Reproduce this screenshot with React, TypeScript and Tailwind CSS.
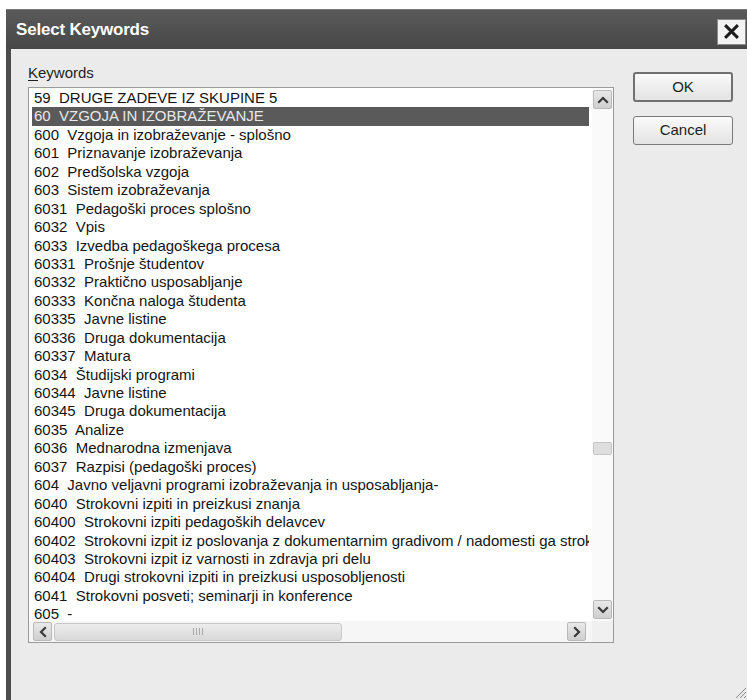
import React from "react";

const keywords: string[] = [
  "59  DRUGE ZADEVE IZ SKUPINE 5",
  "60  VZGOJA IN IZOBRAŽEVANJE",
  "600  Vzgoja in izobraževanje - splošno",
  "601  Priznavanje izobraževanja",
  "602  Predšolska vzgoja",
  "603  Sistem izobraževanja",
  "6031  Pedagoški proces splošno",
  "6032  Vpis",
  "6033  Izvedba pedagoškega procesa",
  "60331  Prošnje študentov",
  "60332  Praktično usposabljanje",
  "60333  Končna naloga študenta",
  "60335  Javne listine",
  "60336  Druga dokumentacija",
  "60337  Matura",
  "6034  Študijski programi",
  "60344  Javne listine",
  "60345  Druga dokumentacija",
  "6035  Analize",
  "6036  Mednarodna izmenjava",
  "6037  Razpisi (pedagoški proces)",
  "604  Javno veljavni programi izobraževanja in usposabljanja-",
  "6040  Strokovni izpiti in preizkusi znanja",
  "60400  Strokovni izpiti pedagoških delavcev",
  "60402  Strokovni izpit iz poslovanja z dokumentarnim gradivom / nadomesti ga strokovni izpit",
  "60403  Strokovni izpit iz varnosti in zdravja pri delu",
  "60404  Drugi strokovni izpiti in preizkusi usposobljenosti",
  "6041  Strokovni posveti; seminarji in konference",
  "605  -",
];

const SELECTED = 1;

function Chevron({ dir }: { dir: "up" | "down" | "left" | "right" }) {
  const paths: Record<string, string> = {
    up: "M3 9 L7 5 L11 9",
    down: "M3 5 L7 9 L11 5",
    left: "M9 3 L5 7 L9 11",
    right: "M5 3 L9 7 L5 11",
  };
  return (
    <svg width="14" height="14" viewBox="0 0 14 14">
      <path d={paths[dir]} fill="none" stroke="#3a3a3a" strokeWidth="2.2" strokeLinecap="square" />
    </svg>
  );
}

function ScrollButton({ dir }: { dir: "up" | "down" | "left" | "right" }) {
  return (
    <div className="w-[19px] h-[19px] rounded-[2px] border border-[#b9b9b9] bg-gradient-to-b from-[#e9e9e9] to-[#cfcfcf] flex items-center justify-center">
      <Chevron dir={dir} />
    </div>
  );
}

export default function App() {
  return (
    <div
      className="w-[747px] h-[700px] bg-white pt-[9px] pl-[6px] overflow-hidden"
      style={{ fontFamily: '"Liberation Sans", Arial, sans-serif' }}
    >
      <div className="h-[700px] flex flex-col bg-[#4c4c4c] rounded-tl-[4px]">
        {/* title bar */}
        <div className="h-[40px] flex items-center justify-between border-t border-[#7a7a7a] bg-gradient-to-b from-[#5a5a5a] to-[#474747]">
          <span className="pl-[10px] text-white font-bold text-[17px] tracking-[-0.2px]">Select Keywords</span>
          <div className="w-[29px] h-[26px] mr-[1px] mt-[4px] bg-[#f3f3f3] border border-[#8c8c8c] flex items-center justify-center">
            <svg width="17" height="17" viewBox="0 0 16 16">
              <path d="M2 2 L14 14 M14 2 L2 14" stroke="#1c1c1c" strokeWidth="2.8" />
            </svg>
          </div>
        </div>

        {/* client area */}
        <div className="relative flex-1 ml-[5px] bg-[#ebebeb] flex items-start">
          <div className="pl-[17px] pt-[15px] flex flex-col">
            <div className="h-[18px] leading-[18px] text-[15px] text-[#1e1e1e]">
              <span className="underline underline-offset-2">K</span>eywords
            </div>
            <div className="mt-[5px] w-[586px] h-[556px] border border-[#9a9a9a] bg-white grid grid-cols-[1fr_21px] grid-rows-[1fr_21px]">
              {/* items */}
              <div className="overflow-hidden pl-[3px] pr-[3px] pt-[1px]">
                {keywords.map((k, i) => (
                  <div
                    key={i}
                    className={
                      "h-[18.45px] leading-[18.45px] pl-[2px] text-[15px] whitespace-pre overflow-hidden " +
                      (i === SELECTED ? "bg-[#5a5a5a] text-[#e8e8e8]" : "text-[#141414]")
                    }
                  >
                    {k}
                  </div>
                ))}
              </div>
              {/* vertical scrollbar */}
              <div className="bg-[#fafafa] flex flex-col items-center justify-between py-[2px]">
                <ScrollButton dir="up" />
                <div className="flex-1 w-full flex flex-col">
                  <div className="h-[333px]" />
                  <div className="mx-[1px] h-[13px] rounded-[2px] border border-[#c4c4c4] bg-[#dedede]" />
                </div>
                <ScrollButton dir="down" />
              </div>
              {/* horizontal scrollbar */}
              <div className="bg-[#f6f6f6] flex items-center pl-[4px] pr-[6px] gap-[2px]">
                <ScrollButton dir="left" />
                <div className="w-[288px] h-[18px] rounded-[3px] border border-[#c8c8c8] bg-gradient-to-b from-[#ececec] to-[#d9d9d9] flex items-center justify-center">
                  <div className="flex gap-[2px]">
                    <div className="w-px h-[7px] bg-[#a8a8a8]" />
                    <div className="w-px h-[7px] bg-[#a8a8a8]" />
                    <div className="w-px h-[7px] bg-[#a8a8a8]" />
                    <div className="w-px h-[7px] bg-[#a8a8a8]" />
                  </div>
                </div>
                <div className="flex-1" />
                <ScrollButton dir="right" />
              </div>
              <div className="bg-[#f0f0f0]" />
            </div>
          </div>

          {/* buttons */}
          <div className="ml-[19px] pt-[23px] flex flex-col gap-[14px]">
            <button className="w-[100px] h-[30px] rounded-[3px] border-2 border-[#707070] bg-gradient-to-b from-[#fafafa] to-[#e3e3e3] text-[15px] text-[#1e1e1e]">
              OK
            </button>
            <button className="w-[100px] h-[29px] rounded-[3px] border border-[#7a7a7a] bg-gradient-to-b from-[#fafafa] to-[#e3e3e3] text-[15px] text-[#1e1e1e]">
              Cancel
            </button>
          </div>

          {/* size grip */}
          <svg className="absolute right-0 top-[636px]" width="14" height="14" viewBox="0 0 14 14">
            <path d="M13 3 L3 13 M13 7 L7 13 M13 11 L11 13" stroke="#8a8a8a" strokeWidth="1" />
          </svg>
        </div>
      </div>
    </div>
  );
}
